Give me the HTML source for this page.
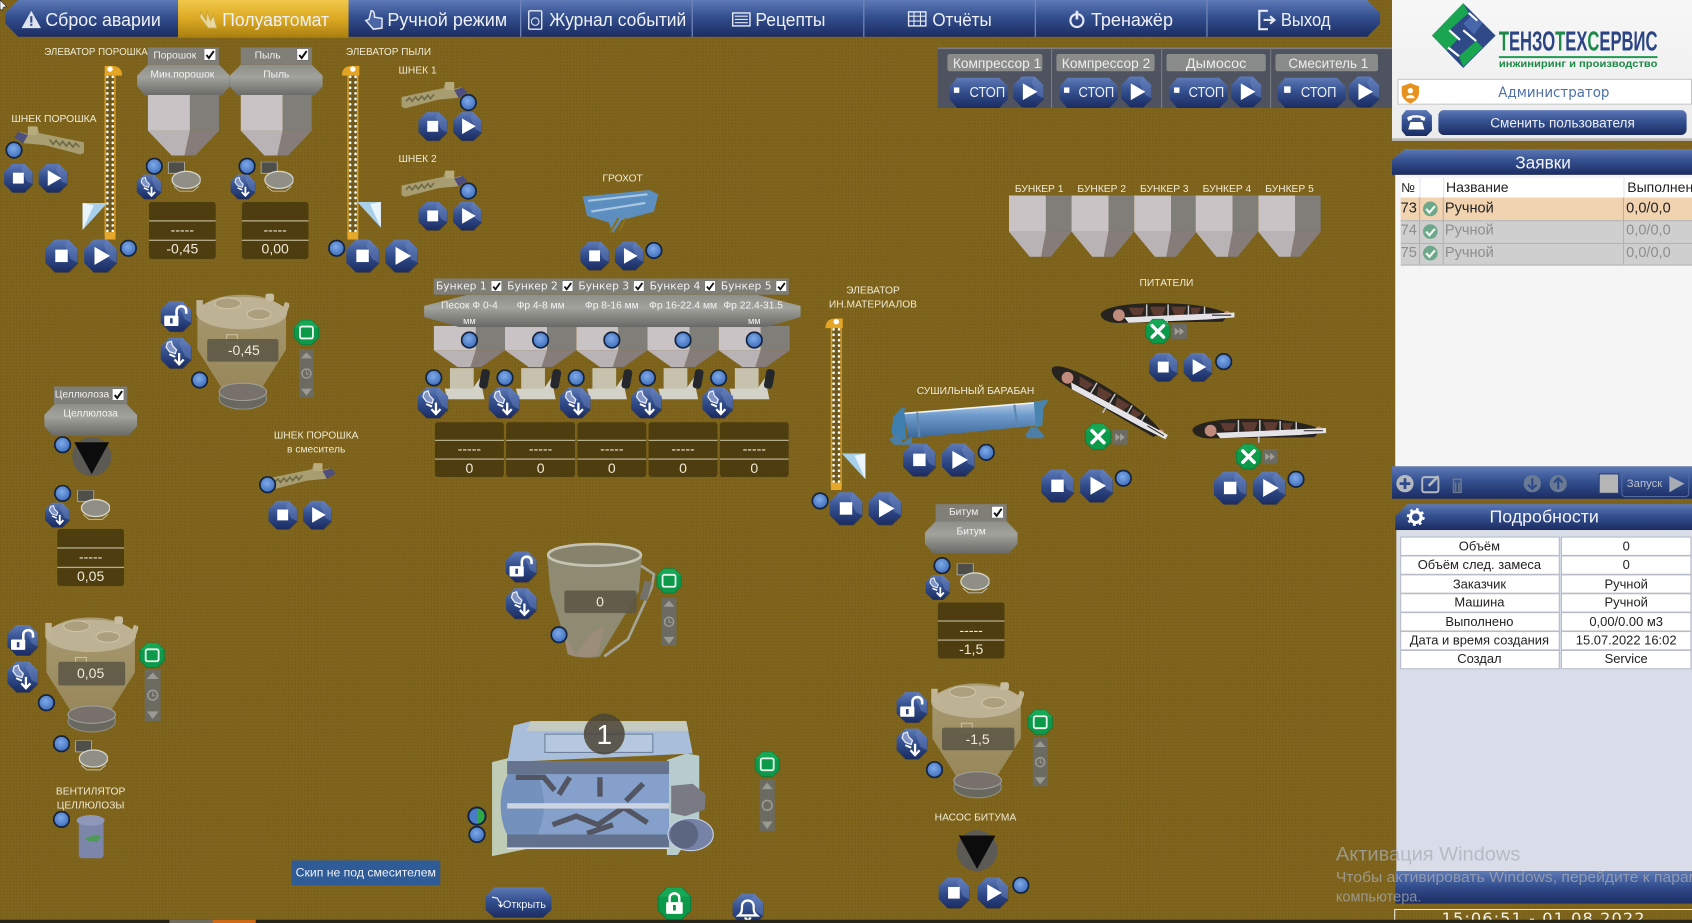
<!DOCTYPE html>
<html lang="ru"><head><meta charset="utf-8"><title>SCADA</title>
<style>
html,body{margin:0;padding:0;background:#7b611b;width:1692px;height:923px;overflow:hidden}
svg{display:block;font-family:"Liberation Sans","DejaVu Sans",sans-serif}
.l{fill:#f0ead4;font-size:9.5px;text-anchor:middle}
.n{fill:#eef0f6;font-size:17px;text-anchor:middle}
.h{fill:#f2f2f2;font-size:9.5px;text-anchor:middle}
.v{fill:#f0ead8;font-size:13px;text-anchor:middle}
.t{fill:#222;font-size:12px;text-anchor:middle}
.r{fill:#222;font-size:13.5px}
.g{fill:#8e8e8e;font-size:13.5px}
.k{fill:#ececec;font-size:13px;text-anchor:middle}
</style></head><body>
<svg width="1692" height="923" viewBox="0 0 1568 855" preserveAspectRatio="none" xmlns="http://www.w3.org/2000/svg">
<defs>
<pattern id="tx" width="3" height="3" patternUnits="userSpaceOnUse"><rect width="3" height="3" fill="#7d631b"/><rect width="1" height="1" fill="#765d19"/><rect x="1.5" y="1.5" width="1" height="1" fill="#84691e"/></pattern>
<linearGradient id="bl" x1="0" y1="0" x2="0" y2="1"><stop offset="0" stop-color="#5d79b6"/><stop offset=".45" stop-color="#34508f"/><stop offset="1" stop-color="#1b2c62"/></linearGradient>
<linearGradient id="go" x1="0" y1="0" x2="0" y2="1"><stop offset="0" stop-color="#f0c84a"/><stop offset=".5" stop-color="#dca922"/><stop offset="1" stop-color="#a87e10"/></linearGradient>
<linearGradient id="ho" x1="0" y1="0" x2="0" y2="1"><stop offset="0" stop-color="#8f8f8a"/><stop offset=".4" stop-color="#a2a29d"/><stop offset="1" stop-color="#686864"/></linearGradient>
<radialGradient id="led" cx=".45" cy=".4" r=".65"><stop offset="0" stop-color="#7eaae8"/><stop offset="1" stop-color="#3a69b8"/></radialGradient>
<linearGradient id="lg" x1="0" y1="0" x2="1" y2="0"><stop offset=".5" stop-color="#4a7cc8"/><stop offset=".5" stop-color="#2ea84a"/></linearGradient>
<linearGradient id="dr" x1="0" y1="0" x2="0" y2="1"><stop offset="0" stop-color="#b7cbe4"/><stop offset=".35" stop-color="#6f9ccc"/><stop offset="1" stop-color="#3a6698"/></linearGradient>
<linearGradient id="pan" x1="0" y1="0" x2="0" y2="1"><stop offset="0" stop-color="#f7f7f7"/><stop offset="1" stop-color="#ececec"/></linearGradient>
<linearGradient id="hb" x1="0" y1="0" x2="0" y2="1"><stop offset="0" stop-color="#a89a72"/><stop offset="1" stop-color="#97875a"/></linearGradient>

<symbol id="oct" viewBox="0 0 100 100"><polygon points="30,4 70,4 96,30 96,70 70,96 30,96 4,70 4,30" fill="#17234a" opacity=".55" transform="translate(2 3)"/><polygon points="30,3 70,3 97,30 97,70 70,97 30,97 3,70 3,30" fill="url(#bl)"/><polygon points="70,3 97,30 97,70 78,60 60,20" fill="#6f8ac4" opacity=".45"/></symbol>
<symbol id="bs" viewBox="0 0 100 100"><use href="#oct" width="100" height="100"/><rect x="32" y="32" width="36" height="36" fill="#fff"/></symbol>
<symbol id="bp" viewBox="0 0 100 100"><use href="#oct" width="100" height="100"/><polygon points="33,24 78,50 33,76" fill="#fff"/></symbol>
<symbol id="bd" viewBox="0 0 100 100"><use href="#oct" width="100" height="100"/><path d="M24 18l12-4 4 14 12 12-4 12-18-6-10-14z" fill="#7f94c4" stroke="#e8ecf6" stroke-width="4"/><path d="M30 54l18 8" stroke="#fff" stroke-width="6"/><path d="M60 50v34M46 70l14 15 14-15" fill="none" stroke="#fff" stroke-width="7"/></symbol>
<symbol id="bu" viewBox="0 0 100 100"><use href="#oct" width="100" height="100"/><rect x="14" y="48" width="44" height="32" rx="3" fill="#fff"/><rect x="32" y="56" width="8" height="16" fill="#2c4485"/><path d="M52 48V34c0-20 30-20 30 0v8" fill="none" stroke="#fff" stroke-width="8"/></symbol>
<symbol id="goct" viewBox="0 0 100 100"><polygon points="30,3 70,3 97,30 97,70 70,97 30,97 3,70 3,30" fill="#0c9a4a" stroke="#0a7a3a" stroke-width="3"/><polygon points="30,3 70,3 97,30 3,30" fill="#1fb25e" opacity=".6"/></symbol>
<symbol id="gs" viewBox="0 0 100 100"><use href="#goct" width="100" height="100"/><rect x="25" y="27" width="50" height="46" rx="7" fill="none" stroke="#e8f8ee" stroke-width="7"/></symbol>
<symbol id="gx" viewBox="0 0 100 100"><use href="#goct" width="100" height="100"/><path d="M28 28l44 44M72 28L28 72" stroke="#fff" stroke-width="13" stroke-linecap="round"/></symbol>
<symbol id="gl" viewBox="0 0 100 100"><use href="#goct" width="100" height="100"/><rect x="26" y="46" width="48" height="34" rx="3" fill="#fff"/><rect x="46" y="54" width="8" height="16" fill="#0c8a42"/><path d="M36 46V34c0-18 28-18 28 0v12" fill="none" stroke="#fff" stroke-width="7"/></symbol>
<symbol id="bl2" viewBox="0 0 100 100"><use href="#oct" width="100" height="100"/><path d="M22 70c10-8 10-16 10-28 0-24 36-24 36 0 0 12 0 20 10 28z M42 76c2 10 14 10 16 0" fill="none" stroke="#fff" stroke-width="7"/></symbol>
<symbol id="ld" viewBox="0 0 20 20"><circle cx="10" cy="10" r="9" fill="url(#led)" stroke="#14233f" stroke-width="2"/></symbol>
<symbol id="ck" viewBox="0 0 12 12"><rect width="12" height="12" fill="#fff" stroke="#555" stroke-width=".8"/><path d="M2.500 6.500l2.500 3 5-7" fill="none" stroke="#111" stroke-width="2"/></symbol>
<symbol id="hood" viewBox="0 0 86 29" preserveAspectRatio="none"><polygon points="10,0 76,0 86,10 86,20 78,29 8,29 0,20 0,10" fill="url(#ho)"/></symbol>
<symbol id="bin" viewBox="0 0 66 56" preserveAspectRatio="none"><polygon points="0,0 39,0 39,33 0,33" fill="#c9c3c5"/><polygon points="39,0 66,0 66,33 39,33" fill="#7f7e78"/><polygon points="0,33 39,33 34,56 22,56" fill="#b9b3b5"/><polygon points="39,33 66,33 44,56 34,56" fill="#867c7a"/></symbol>
<symbol id="dsp" viewBox="0 0 62 53" preserveAspectRatio="none"><rect width="62" height="53" rx="3" fill="#4e3d0f"/><rect y="17" width="62" height="1.200" fill="#b7ae8e"/><rect y="35" width="62" height="1.200" fill="#b7ae8e"/></symbol>
<symbol id="sld" viewBox="0 0 15 48"><rect width="15" height="48" fill="#6c6b62"/><polygon points="2,9 13,9 7.500,3" fill="#9a9a94"/><polygon points="2,39 13,39 7.500,46" fill="#9a9a94"/><circle cx="7.500" cy="24" r="4.500" fill="none" stroke="#9a9a94" stroke-width="1.500"/><path d="M7.500 21v3.500h2.500" fill="none" stroke="#9a9a94"/></symbol>
<symbol id="sc" viewBox="0 0 36 32"><rect x="2" y="0" width="17" height="12" fill="#4d4f48" stroke="#bcbcb4" stroke-width=".8"/><ellipse cx="21" cy="19" rx="15" ry="9" fill="#8f8f86" stroke="#d6d6d0" stroke-width="1.400"/><path d="M8 26l6 5 14 0 6-5" fill="none" stroke="#bfbfb8"/></symbol>
<symbol id="scr" viewBox="0 0 76 32"><path d="M0 17l48-10 2-7h10v8l8-2 6 6-10 6-22 2-38 10-4-2z" fill="#a89d70"/><rect x="50" y="0" width="10" height="9" fill="#b8ac7e"/><polygon points="60,9 70,6 75,12 65,18" fill="#4f4f7e"/><path d="M5 22l4-4 3 4 4-5 3 4 4-5 3 4 4-5 3 4 4-5" fill="none" stroke="#6f6a46" stroke-width="1.800"/></symbol>
<symbol id="ffb" viewBox="0 0 16 16"><rect width="16" height="16" fill="#6c6b62"/><polygon points="3,4 8,8 3,12" fill="#9f9f98"/><polygon points="8,4 13,8 8,12" fill="#9f9f98"/></symbol>
<symbol id="conv" viewBox="0 0 125 24" preserveAspectRatio="none"><path d="M0 11C2 4 30 0 60 1c30 0 50 5 60 10l-6 7-94 1C8 20 0 16 0 11z" fill="#27231f"/><circle cx="17" cy="12" r="5.500" fill="#c08a7c"/><circle cx="118" cy="11" r="3" fill="#c08a7c"/><path d="M26 5h15l-3 7H30zM46 4h15l-3 8H49zM66 4h14l-3 8H69zM84 5h10l-3 6h-6z" fill="#5e3c32"/><path d="M43 2v14M63 2v14M82 3v13M97 4v10" stroke="#c9c9cc" stroke-width="1.400"/><polygon points="22,14 125,9.500 125,14 100,16 26,19" fill="#e4e4e8"/><path d="M104 12h18" stroke="#2a2622"/><path d="M62 17v6" stroke="#bbb" stroke-width="1.500"/></symbol>
<symbol id="hop" viewBox="0 0 88 110" preserveAspectRatio="none"><path d="M3 22C6 8 26 3 44 3s38 5 41 19v32L61 92H27L3 54z" fill="url(#hb)"/><ellipse cx="44" cy="20" rx="42" ry="15" fill="#bdb294"/><ellipse cx="31" cy="11" rx="12" ry="5" fill="#ab9f7e" stroke="#cec4a8"/><ellipse cx="60" cy="21" rx="11" ry="5" fill="#ab9f7e" stroke="#cec4a8"/><rect x="66" y="2" width="8" height="7" rx="2" fill="#c6bca0"/><rect x="2" y="8" width="6" height="12" fill="#bfb596"/><rect x="82" y="10" width="5" height="14" fill="#bfb596" transform="rotate(20 84 16)"/><rect x="30" y="40" width="10" height="8" fill="none" stroke="#c9bf9f"/><ellipse cx="45" cy="99" rx="22" ry="10" fill="#68685f" stroke="#8e8e86"/><ellipse cx="45" cy="93" rx="22" ry="8" fill="#78706a" stroke="#9ea09a"/></symbol>
<symbol id="elev" viewBox="0 0 16 160" preserveAspectRatio="none"><rect x="5" y="0" width="6" height="160" fill="#6e5a20"/><path d="M3.500 6V156M12.500 6V156" stroke="#d89a22" stroke-width="1.400"/><path d="M5.500 4V156M10.500 4V156" stroke="#fff" stroke-width="2.400" stroke-linecap="round" stroke-dasharray=".1 5"/><rect x="3" y="153" width="10" height="7" fill="#e6a82a"/></symbol>
<symbol id="fun" viewBox="0 0 22 24"><polygon points="0,0 22,0 22,24" fill="#a8d0ea"/><polygon points="12,2 22,0 22,24" fill="#eaf5fb"/></symbol>
<symbol id="wei" viewBox="0 0 44 30"><rect x="5" y="1" width="22" height="20" fill="#c7c2ae"/><polygon points="0,20 26,20 33,10 37,30 3,30" fill="#d3d2c9"/><rect x="33" y="2" width="8" height="18" rx="3" fill="#24272c" transform="rotate(10 37 11)"/></symbol>
<symbol id="pump" viewBox="0 0 40 40"><circle cx="20" cy="20" r="19" fill="#5b5a55"/><polygon points="3,6 37,6 20,37" fill="#0c0c0c"/></symbol>
<symbol id="chk" viewBox="0 0 20 20"><circle cx="10" cy="10" r="8" fill="#6ea88a"/><path d="M5.500 10l3.500 4 6-7" fill="none" stroke="#eef6f0" stroke-width="2.400"/></symbol>
</defs>

<rect width="1568" height="855" fill="url(#tx)"/>
<polygon points="0,0 6,6 3,7 2,10 0,8" fill="#eee" stroke="#111" stroke-width=".5"/>

<!-- NAV -->
<polygon points="17,0 1267,0 1279,12 1279,22 1267,34 17,34 5,22 5,12" fill="url(#bl)"/>
<rect x="165" y="0" width="158" height="35" fill="url(#go)"/>
<path d="M482.500 0V34M641.500 0V34M800.500 0V34M959.500 0V34M1118.500 0V34" stroke="#6f85b8" stroke-width="1.200"/>
<text class="n" x="95.500" y="24" textLength="107" lengthAdjust="spacingAndGlyphs">Сброс аварии</text>
<text class="n" x="255.500" y="24" textLength="99" lengthAdjust="spacingAndGlyphs">Полуавтомат</text>
<text class="n" x="414.500" y="24" textLength="111" lengthAdjust="spacingAndGlyphs">Ручной режим</text>
<text class="n" x="572.500" y="24" textLength="127" lengthAdjust="spacingAndGlyphs">Журнал событий</text>
<text class="n" x="732.500" y="24" textLength="65" lengthAdjust="spacingAndGlyphs">Рецепты</text>
<text class="n" x="891.500" y="24" textLength="55" lengthAdjust="spacingAndGlyphs">Отчёты</text>
<text class="n" x="1049" y="24" textLength="76" lengthAdjust="spacingAndGlyphs">Тренажёр</text>
<text class="n" x="1210" y="24" textLength="46" lengthAdjust="spacingAndGlyphs">Выход</text>
<path d="M29 10l9 16H20z" fill="#dfe3ec"/><rect x="28" y="15" width="2" height="6" fill="#344e8d"/><rect x="28" y="22" width="2" height="2" fill="#344e8d"/>
<path d="M186 11l5 8 1-9 3 9 3-5 3 12h-8l-8-10z" fill="#e8d9a0" stroke="#caa63c"/>
<path d="M344 10c3 0 3 3 3 6l7 1 0 9-8 1-7-8 3-1z" fill="#4a66a6" stroke="#e4e8f2" stroke-width="1.400"/>
<rect x="490" y="10" width="12" height="17" rx="1" fill="none" stroke="#e4e8f2" stroke-width="1.300"/><circle cx="496" cy="20" r="3.500" fill="none" stroke="#e4e8f2"/>
<rect x="679" y="12" width="16" height="12" fill="none" stroke="#e4e8f2" stroke-width="1.300"/><path d="M681 15h12M681 18h12M681 21h12" stroke="#e4e8f2"/>
<rect x="842" y="11" width="16" height="13" fill="none" stroke="#e4e8f2" stroke-width="1.300"/><path d="M842 15h16M842 19.500h16M847 11v13M853 11v13" stroke="#e4e8f2"/>
<circle cx="998" cy="19" r="6" fill="none" stroke="#e4e8f2" stroke-width="2"/><path d="M998 10v8" stroke="#e4e8f2" stroke-width="2.500"/>
<path d="M1175 10h-8v17h8M1171 18.500h9M1177 15l4 3.500-4 3.500" fill="none" stroke="#e4e8f2" stroke-width="2"/>

<!-- Elevator 1 -->
<text class="l" x="89" y="51" textLength="96" lengthAdjust="spacingAndGlyphs">ЭЛЕВАТОР ПОРОШКА</text>
<use href="#elev" x="94" y="62" width="16" height="160"/>
<path d="M97 70v-9h6c6 0 10 2 10 9z" fill="#e4a525"/><circle cx="102" cy="64" r="2.500" fill="#fff"/>
<use href="#fun" x="76" y="188" width="24" height="25" transform="translate(176 0) scale(-1 1)"/>
<!-- Powders -->
<rect x="137" y="44" width="66" height="16" fill="#7f7e77"/><rect x="223" y="44" width="66" height="16" fill="#7f7e77"/>
<text class="h" x="162" y="54">Порошок</text><text class="h" x="248" y="54">Пыль</text>
<use href="#ck" x="189" y="45" width="11" height="11"/><use href="#ck" x="275" y="45" width="11" height="11"/>
<use href="#hood" x="127" y="60" width="86" height="29"/><use href="#hood" x="213" y="60" width="86" height="29"/>
<text class="h" x="169" y="72">Мин.порошок</text><text class="h" x="256" y="72">Пыль</text>
<use href="#bin" x="137" y="88" width="66" height="56"/><use href="#bin" x="223" y="88" width="66" height="56"/>
<use href="#sc" x="154" y="150" width="32" height="28"/><use href="#sc" x="240" y="150" width="32" height="28"/>
<use href="#ld" x="135" y="146" width="16" height="16"/><use href="#ld" x="221" y="146" width="16" height="16"/>
<use href="#bd" x="126" y="161" width="24" height="24"/><use href="#bd" x="213" y="161" width="24" height="24"/>
<use href="#dsp" x="138" y="187" width="62" height="53"/><use href="#dsp" x="224" y="187" width="62" height="53"/>
<text class="v" x="169" y="217">-----</text><text class="v" x="255" y="217">-----</text>
<text class="v" x="169" y="235">-0,45</text><text class="v" x="255" y="235">0,00</text>
<!-- Elevator 2 -->
<text class="l" x="360" y="51" textLength="79" lengthAdjust="spacingAndGlyphs">ЭЛЕВАТОР ПЫЛИ</text>
<use href="#elev" x="319" y="62" width="16" height="160"/>
<path d="M333 70v-9h-6c-6 0-10 2-10 9z" fill="#e4a525"/><circle cx="327" cy="64" r="2.500" fill="#fff"/>
<use href="#fun" x="331" y="187" width="22" height="24"/>
<!-- screws -->
<text class="l" x="50" y="113" textLength="79" lengthAdjust="spacingAndGlyphs">ШНЕК ПОРОШКА</text>
<use href="#scr" x="12" y="117" width="66" height="28" transform="translate(90 0) scale(-1 1)"/>
<use href="#ld" x="5" y="131" width="16" height="16"/>
<text class="l" x="387" y="68">ШНЕК 1</text><use href="#scr" x="370" y="76" width="66" height="26"/><use href="#ld" x="426" y="87" width="16" height="16"/>
<text class="l" x="387" y="150">ШНЕК 2</text><use href="#scr" x="370" y="158" width="66" height="26"/><use href="#ld" x="426" y="169" width="16" height="16"/>
<text class="l" x="293" y="406">ШНЕК ПОРОШКА</text><text class="l" x="293" y="419">в смеситель</text>
<use href="#scr" x="248" y="429" width="66" height="26"/><use href="#ld" x="240" y="441" width="16" height="16"/>
<!-- grokhot -->
<text class="l" x="577" y="168">ГРОХОТ</text>
<path d="M540 182l62-6 8 4-4 16-30 8-8 12-4-10-20-6z" fill="#5c8fc0"/><path d="M545 186l55-6M548 196l50-8" stroke="#a9c8e2" stroke-width="2"/><path d="M565 216l8-14M574 214l6-12" stroke="#8a6f1c" stroke-width="2"/>
<!-- Compressors -->
<rect x="869" y="44" width="421" height="56" fill="#4e535f"/>
<rect x="869" y="44" width="421" height="1.500" fill="#7a7d83"/>
<path d="M974.500 46V100M1076.500 46V100M1177.500 46V100" stroke="#7a7d83"/>
<g fill="#8a8c8a"><rect x="878" y="50" width="88" height="16" rx="2"/><rect x="979" y="50" width="91" height="16" rx="2"/><rect x="1081" y="50" width="92" height="16" rx="2"/><rect x="1182" y="50" width="95" height="16" rx="2"/></g>
<text class="k" x="924" y="63" textLength="82" lengthAdjust="spacingAndGlyphs">Компрессор 1</text>
<text class="k" x="1025" y="63" textLength="82" lengthAdjust="spacingAndGlyphs">Компрессор 2</text>
<text class="k" x="1127" y="63" textLength="56" lengthAdjust="spacingAndGlyphs">Дымосос</text>
<text class="k" x="1231" y="63" textLength="74" lengthAdjust="spacingAndGlyphs">Смеситель 1</text>
<g fill="url(#bl)">
<polygon points="887,72 926,72 934,80 934,92 926,100 887,100 880,92 880,80"/>
<polygon points="989,72 1028,72 1036,80 1036,92 1028,100 989,100 982,92 982,80"/>
<polygon points="1091,72 1130,72 1138,80 1138,92 1130,100 1091,100 1084,92 1084,80"/>
<polygon points="1191,72 1239,72 1247,80 1247,92 1239,100 1191,100 1184,92 1184,80"/>
</g>
<g fill="#fff"><rect x="884" y="81" width="5" height="5"/><rect x="986" y="81" width="5" height="5"/><rect x="1088" y="81" width="5" height="5"/><rect x="1190" y="80" width="6" height="6"/></g>
<g fill="#eef0f6" font-size="14" text-anchor="middle"><text x="915" y="90" textLength="33" lengthAdjust="spacingAndGlyphs">СТОП</text><text x="1016" y="90" textLength="33" lengthAdjust="spacingAndGlyphs">СТОП</text><text x="1118" y="90" textLength="33" lengthAdjust="spacingAndGlyphs">СТОП</text><text x="1222" y="90" textLength="33" lengthAdjust="spacingAndGlyphs">СТОП</text></g>
<use href="#bp" x="938" y="70" width="30" height="30"/><use href="#bp" x="1038" y="70" width="30" height="30"/><use href="#bp" x="1140" y="70" width="30" height="30"/><use href="#bp" x="1249" y="70" width="30" height="30"/>
<!-- Bunkers right -->
<g><text class="l" x="963" y="178">БУНКЕР 1</text><text class="l" x="1021" y="178">БУНКЕР 2</text><text class="l" x="1079" y="178">БУНКЕР 3</text><text class="l" x="1137" y="178">БУНКЕР 4</text><text class="l" x="1195" y="178">БУНКЕР 5</text></g>
<use href="#bin" x="935" y="181" width="58" height="57"/><use href="#bin" x="993" y="181" width="58" height="57"/><use href="#bin" x="1051" y="181" width="58" height="57"/><use href="#bin" x="1108" y="181" width="58" height="57"/><use href="#bin" x="1166" y="181" width="58" height="57"/>
<!-- Hopper 1 -->
<use href="#hop" x="180" y="270" width="88" height="110"/>
<rect x="192" y="314" width="66" height="21" rx="2" fill="#5c5646" opacity=".88"/><text class="v" x="226" y="329">-0,45</text>
<use href="#bu" x="148" y="278" width="30" height="30"/><use href="#bd" x="148" y="312" width="30" height="30"/>
<use href="#ld" x="177" y="344" width="16" height="16"/>
<use href="#gs" x="272" y="296" width="24" height="24"/><use href="#sld" x="277" y="322" width="14" height="48"/>
<!-- Aggregates -->
<rect x="402" y="258" width="329" height="15" fill="#7f7e77"/>
<g fill="#f2f2f2" font-size="9.500" font-family="DejaVu Sans" style="white-space:pre"><text x="404" y="268" textLength="47" lengthAdjust="spacingAndGlyphs">Бункер  1</text><text x="470" y="268" textLength="47" lengthAdjust="spacingAndGlyphs">Бункер  2</text><text x="536" y="268" textLength="47" lengthAdjust="spacingAndGlyphs">Бункер  3</text><text x="602" y="268" textLength="47" lengthAdjust="spacingAndGlyphs">Бункер  4</text><text x="668" y="268" textLength="47" lengthAdjust="spacingAndGlyphs">Бункер  5</text></g>
<use href="#ck" x="455" y="260" width="10" height="10"/><use href="#ck" x="521" y="260" width="10" height="10"/><use href="#ck" x="587" y="260" width="10" height="10"/><use href="#ck" x="653" y="260" width="10" height="10"/><use href="#ck" x="719" y="260" width="10" height="10"/>
<use href="#bin" x="402" y="302" width="66" height="38"/><use href="#bin" x="468" y="302" width="66" height="38"/><use href="#bin" x="534" y="302" width="66" height="38"/><use href="#bin" x="600" y="302" width="66" height="38"/><use href="#bin" x="666" y="302" width="66" height="38"/>
<use href="#hood" x="393" y="273" width="349" height="30"/>
<g><text class="h" x="435" y="286">Песок Ф 0-4</text><text class="h" x="501" y="286">Фр 4-8 мм</text><text class="h" x="567" y="286">Фр 8-16 мм</text><text class="h" x="633" y="286">Фр 16-22.4 мм</text><text class="h" x="698" y="286">Фр 22.4-31.5</text><text class="h" x="435" y="300" style="font-size:8.500px">мм</text><text class="h" x="699" y="300" style="font-size:8.500px">мм</text></g>
<use href="#ld" x="427" y="307" width="16" height="16"/><use href="#ld" x="493" y="307" width="16" height="16"/><use href="#ld" x="559" y="307" width="16" height="16"/><use href="#ld" x="625" y="307" width="16" height="16"/><use href="#ld" x="691" y="307" width="16" height="16"/>
<use href="#wei" x="412" y="340" width="44" height="30"/><use href="#wei" x="478" y="340" width="44" height="30"/><use href="#wei" x="544" y="340" width="44" height="30"/><use href="#wei" x="610" y="340" width="44" height="30"/><use href="#wei" x="676" y="340" width="44" height="30"/>
<use href="#ld" x="394" y="342" width="16" height="16"/><use href="#ld" x="460" y="342" width="16" height="16"/><use href="#ld" x="526" y="342" width="16" height="16"/><use href="#ld" x="592" y="342" width="16" height="16"/><use href="#ld" x="658" y="342" width="16" height="16"/>
<use href="#bd" x="386" y="358" width="30" height="30"/><use href="#bd" x="452" y="358" width="30" height="30"/><use href="#bd" x="518" y="358" width="30" height="30"/><use href="#bd" x="584" y="358" width="30" height="30"/><use href="#bd" x="650" y="358" width="30" height="30"/>
<use href="#dsp" x="403" y="391" width="64" height="51"/><use href="#dsp" x="469" y="391" width="64" height="51"/><use href="#dsp" x="535" y="391" width="64" height="51"/><use href="#dsp" x="601" y="391" width="64" height="51"/><use href="#dsp" x="667" y="391" width="64" height="51"/>
<g><text class="v" x="435" y="420">-----</text><text class="v" x="501" y="420">-----</text><text class="v" x="567" y="420">-----</text><text class="v" x="633" y="420">-----</text><text class="v" x="699" y="420">-----</text><text class="v" x="435" y="438">0</text><text class="v" x="501" y="438">0</text><text class="v" x="567" y="438">0</text><text class="v" x="633" y="438">0</text><text class="v" x="699" y="438">0</text></g>
<!-- Elevator 3 -->
<text class="l" x="809" y="272">ЭЛЕВАТОР</text><text class="l" x="809" y="285">ИН.МАТЕРИАЛОВ</text>
<use href="#elev" x="767" y="296" width="16" height="158"/>
<path d="M781 304v-9h-6c-6 0-10 2-10 9z" fill="#e4a525"/><circle cx="775" cy="298" r="2.500" fill="#fff"/>
<use href="#fun" x="780" y="420" width="22" height="24"/>
<!-- Cellulose -->
<rect x="50" y="358" width="68" height="16" fill="#7f7e77"/><text class="h" x="76" y="368">Целлюлоза</text><use href="#ck" x="104" y="360" width="11" height="11"/>
<use href="#hood" x="41" y="374" width="86" height="30"/><text class="h" x="84" y="386">Целлюлоза</text>
<use href="#pump" x="66" y="404" width="38" height="38"/><use href="#ld" x="50" y="404" width="16" height="16"/>
<use href="#ld" x="50" y="449" width="16" height="16"/><use href="#bd" x="41" y="465" width="24" height="24"/><use href="#sc" x="70" y="454" width="32" height="28"/>
<use href="#dsp" x="53" y="490" width="62" height="53"/><text class="v" x="84" y="520">-----</text><text class="v" x="84" y="538">0,05</text>
<!-- Hopper 2 -->
<use href="#hop" x="40" y="569" width="88" height="110"/>
<rect x="54" y="613" width="62" height="22" rx="2" fill="#5c5646" opacity=".88"/><text class="v" x="84" y="628">0,05</text>
<use href="#bu" x="6" y="578" width="30" height="30"/><use href="#bd" x="6" y="612" width="30" height="30"/>
<use href="#ld" x="35" y="643" width="16" height="16"/>
<use href="#gs" x="129" y="595" width="24" height="24"/><use href="#sld" x="134" y="620" width="15" height="48"/>
<use href="#ld" x="49" y="681" width="16" height="16"/><use href="#sc" x="68" y="686" width="32" height="28"/>
<!-- vent -->
<text class="l" x="84" y="736">ВЕНТИЛЯТОР</text><text class="l" x="84" y="749">ЦЕЛЛЮЛОЗЫ</text>
<use href="#ld" x="49" y="751" width="16" height="16"/>
<rect x="73" y="760" width="23" height="35" rx="3" fill="#7c86aa"/><ellipse cx="84" cy="760" rx="13" ry="5" fill="#8f98b8"/><path d="M78 777l10-4 6 2-4 5-8-1z" fill="#4f9a58"/>
<!-- Hopper 3 -->
<path d="M507 514L510 548 527 604Q540 612 556 608L592 548 595 514z" fill="#8f8a72"/>
<path d="M522 585l12 22 12-18 14-10-6 28q-16 4-28-1z" fill="#9c8c7a"/>
<ellipse cx="551" cy="514" rx="43" ry="10" fill="#86826c" stroke="#c6c5b4" stroke-width="2.500"/>
<path d="M594 524l12 8-2 12-22 48-22 16" fill="none" stroke="#a4a498" stroke-width="2.500"/>
<rect x="595" y="538" width="7" height="18" fill="#73736c" transform="rotate(16 598 547)"/>
<rect x="523" y="547" width="67" height="21" rx="2" fill="#5c5646" opacity=".88"/><text class="v" x="556" y="562">0</text>
<use href="#bu" x="468" y="510" width="30" height="30"/><use href="#bd" x="468" y="544" width="30" height="30"/>
<use href="#ld" x="510" y="580" width="16" height="16"/>
<use href="#gs" x="608" y="526" width="24" height="24"/><use href="#sld" x="613" y="552" width="14" height="48"/>
<!-- Bitum -->
<rect x="867" y="467" width="66" height="16" fill="#7f7e77"/><text class="h" x="893" y="477">Битум</text><use href="#ck" x="919" y="469" width="11" height="11"/>
<use href="#hood" x="857" y="483" width="86" height="30"/><text class="h" x="900" y="495">Битум</text>
<use href="#ld" x="865" y="516" width="16" height="16"/><use href="#bd" x="857" y="532" width="24" height="24"/><use href="#sc" x="885" y="522" width="32" height="28"/>
<use href="#dsp" x="869" y="558" width="62" height="52"/><text class="v" x="900" y="588">-----</text><text class="v" x="900" y="606">-1,5</text>
<!-- Hopper 4 -->
<use href="#hop" x="861" y="630" width="88" height="110"/>
<rect x="873" y="674" width="67" height="21" rx="2" fill="#5c5646" opacity=".88"/><text class="v" x="906" y="689">-1,5</text>
<use href="#bu" x="830" y="640" width="30" height="30"/><use href="#bd" x="830" y="674" width="30" height="30"/>
<use href="#ld" x="858" y="705" width="16" height="16"/>
<use href="#gs" x="952" y="657" width="24" height="24"/><use href="#sld" x="957" y="682" width="14" height="48"/>
<text class="l" x="904" y="760">НАСОС БИТУМА</text>
<use href="#pump" x="885" y="768" width="41" height="40"/>
<!-- Drum -->
<text class="l" x="904" y="365">СУШИЛЬНЫЙ БАРАБАН</text>
<polygon points="838,383 960,373 963,394 842,406" fill="url(#dr)"/><path d="M838 383l122-10" stroke="#eef3f8" stroke-width="1.500"/>
<path d="M850 382l2 23M940 375l3 21" stroke="#5f86ae" stroke-width="2"/>
<path d="M840 378l-5 0-7 8-2 14 4 8 10-1-2-27z" fill="#3f7fb0"/><path d="M958 372l14-2-5 8-1 16-6 2z" fill="#4a84ac"/>
<path d="M824 407l7-5 6 8 8-6 0 8h-16zM950 403l6-8 6 2 6 7-2 2h-14z" fill="#4d7fa6"/>
<!-- conveyors -->
<use href="#conv" x="1020" y="280" width="124" height="24"/>
<use href="#conv" x="1105" y="387" width="124" height="24"/>
<use href="#conv" width="124" height="24" transform="translate(981 331) rotate(31)"/>
<text class="l" x="1081" y="265">ПИТАТЕЛИ</text>
<use href="#gx" x="1061" y="295" width="24" height="24"/><use href="#ffb" x="1086" y="300" width="14" height="14"/>
<use href="#gx" x="1005" y="392" width="25" height="25"/><use href="#ffb" x="1031" y="398" width="14" height="14"/>
<use href="#gx" x="1145" y="411" width="24" height="24"/><use href="#ffb" x="1170" y="416" width="14" height="14"/>
<!-- Stop play pairs -->
<use href="#bs" x="3" y="151" width="28" height="28"/><use href="#bp" x="35" y="151" width="28" height="28"/>
<use href="#bs" x="41" y="221" width="32" height="32"/><use href="#bp" x="77" y="221" width="32" height="32"/><use href="#ld" x="111" y="222" width="16" height="16"/>
<use href="#bs" x="320" y="221" width="32" height="32"/><use href="#bp" x="356" y="221" width="32" height="32"/><use href="#ld" x="304" y="222" width="16" height="16"/>
<use href="#bs" x="387" y="103" width="28" height="28"/><use href="#bp" x="419" y="103" width="28" height="28"/>
<use href="#bs" x="387" y="186" width="28" height="28"/><use href="#bp" x="419" y="186" width="28" height="28"/>
<use href="#bs" x="537" y="223" width="28" height="28"/><use href="#bp" x="569" y="223" width="28" height="28"/><use href="#ld" x="598" y="224" width="16" height="16"/>
<use href="#bs" x="836" y="410" width="32" height="32"/><use href="#bp" x="872" y="410" width="32" height="32"/><use href="#ld" x="906" y="411" width="16" height="16"/>
<use href="#bs" x="964" y="434" width="32" height="32"/><use href="#bp" x="1000" y="434" width="32" height="32"/><use href="#ld" x="1033" y="435" width="16" height="16"/>
<use href="#bs" x="1064" y="326" width="28" height="28"/><use href="#bp" x="1096" y="326" width="28" height="28"/><use href="#ld" x="1126" y="327" width="16" height="16"/>
<use href="#bs" x="1124" y="436" width="32" height="32"/><use href="#bp" x="1160" y="436" width="32" height="32"/><use href="#ld" x="1193" y="436" width="16" height="16"/>
<use href="#bs" x="768" y="455" width="32" height="32"/><use href="#bp" x="804" y="455" width="32" height="32"/><use href="#ld" x="752" y="456" width="16" height="16"/>
<use href="#bs" x="248" y="463" width="28" height="28"/><use href="#bp" x="280" y="463" width="28" height="28"/>
<use href="#bs" x="869" y="812" width="30" height="30"/><use href="#bp" x="905" y="812" width="30" height="30"/><use href="#ld" x="938" y="812" width="16" height="16"/>
<!-- Mixer -->
<polygon points="456,706 472,702 472,782 500,784 456,793" fill="#c6d8c8" opacity=".9"/>
<polygon points="618,704 636,698 648,700 648,760 628,792 618,792" fill="#bcd6dc" opacity=".92"/>
<polygon points="476,672 492,668 636,668 642,698 470,706" fill="#a9bedb"/>
<polygon points="492,668 636,668 638,677 488,677" fill="#c6cbc2"/>
<rect x="505" y="680" width="100" height="17" fill="#b6c8df" stroke="#6d7f98"/>
<rect x="470" y="705" width="150" height="80" fill="#85a0ca"/>
<ellipse cx="484" cy="746" rx="20" ry="38" fill="#7490bd"/>
<rect x="470" y="705" width="150" height="12" fill="#65738c"/>
<path d="M478 720h26l10 12M528 720l-10 16M556 720v18M596 726l-16 16M512 764l22-8 20 8 24-16 22 14M544 772l24-8" fill="none" stroke="#535662" stroke-width="5"/>
<rect x="470" y="744" width="150" height="5" fill="#cbd4e0"/>
<rect x="470" y="773" width="150" height="12" fill="#62718d"/>
<rect x="470" y="785" width="150" height="1.500" fill="#e0e4ea"/>
<path d="M622 728l20-2 12 10-1 14-18 6-13-3z" fill="#7a7a84"/>
<ellipse cx="640" cy="773" rx="21" ry="15" fill="#7783a6" stroke="#c6d2e4"/>
<ellipse cx="634" cy="773" rx="13" ry="13" fill="#5d6680"/>
<circle cx="560" cy="680" r="19" fill="#4a4436" opacity=".85"/><text x="560" y="689" fill="#fff" font-size="26" text-anchor="middle">1</text>
<circle cx="442" cy="756" r="8" fill="url(#lg)" stroke="#14233f" stroke-width="1.800"/><use href="#ld" x="434" y="765" width="16" height="16"/>
<use href="#gs" x="699" y="696" width="24" height="24"/>
<rect x="704" y="722" width="14" height="48" fill="#6c6b62"/><polygon points="706,731 716,731 711,725" fill="#9a9a94"/><polygon points="706,761 716,761 711,768" fill="#9a9a94"/><circle cx="711" cy="746" r="4.500" fill="none" stroke="#9a9a94" stroke-width="1.500"/>
<!-- bottom controls -->
<rect x="270" y="797" width="138" height="23" rx="2" fill="#2f5b96"/>
<text x="339" y="812" fill="#eef2f8" font-size="11" text-anchor="middle" textLength="130" lengthAdjust="spacingAndGlyphs">Скип не под смесителем</text>
<polygon points="458,822 503,822 511,830 511,843 503,850 458,850 450,843 450,830" fill="url(#bl)"/>
<text x="486" y="841" fill="#f0f2f8" font-size="10.500" text-anchor="middle" textLength="40" lengthAdjust="spacingAndGlyphs">Открыть</text><path d="M456 831l5 1 2 4M464 835v5l-2-2m2 2l2-2" fill="none" stroke="#fff"/>
<use href="#gl" x="609" y="821" width="32" height="32"/>
<use href="#bl2" x="678" y="827" width="30" height="30"/>

<!-- RIGHT PANEL -->
<rect x="1290" y="0" width="278" height="129" fill="url(#pan)"/>
<rect x="1290" y="128" width="278" height="2.500" fill="#bcbcbc"/>
<g>
<polygon points="1356,3 1386,33 1356,63 1327,33" fill="#2f4a86"/>
<polygon points="1356,3 1327,33 1341,47 1351,36 1343,28 1361,12" fill="#1aa650"/>
<polygon points="1364,14 1374,21 1366,32 1356,22" fill="#4767ad"/>
<polygon points="1352,52 1368,38 1374,44 1356,62" fill="#1aa650"/>
<path d="M1343 28l10 9M1361 12l8 7M1352 52l-10-8M1368 38l-12-10" stroke="#fff" stroke-width="2"/>
</g>
<text x="1389" y="47" font-size="26" font-weight="bold" fill="#2b4484" textLength="147" lengthAdjust="spacingAndGlyphs"><tspan fill="#1d8a4a">Т</tspan>ЕНЗО<tspan fill="#1d8a4a">Т</tspan>ЕХ<tspan fill="#1d8a4a">С</tspan>ЕРВИС</text>
<rect x="1389" y="52" width="147" height="1.800" fill="#1d9a50"/>
<text x="1389" y="62" font-size="9.500" font-weight="bold" fill="#1e8a48" textLength="147" lengthAdjust="spacingAndGlyphs">инжиниринг и производство</text>
<rect x="1295.500" y="73.500" width="272" height="23" fill="#fff" stroke="#c8c8c8"/>
<path d="M1307 77l8 3v6c0 5-4 8-8 10-4-2-8-5-8-10v-6z" fill="#e8921e"/><circle cx="1307" cy="84" r="2.500" fill="#fff"/><path d="M1303 91c0-4 8-4 8 0z" fill="#fff"/>
<text x="1440" y="90" fill="#4d70a8" font-size="13" font-family="DejaVu Sans" text-anchor="middle" textLength="103" lengthAdjust="spacingAndGlyphs">Администратор</text>
<polygon points="1303,102 1322,102 1327,107 1327,121 1322,126 1303,126 1299,121 1299,107" fill="url(#bl)"/>
<path d="M1304 109c3-3 13-3 17 0l-1 3-3-1-1-2h-7l-1 2-3 1zM1307 113h11l2 7h-15z" fill="#fff"/>
<rect x="1333" y="102" width="230" height="23" rx="5" fill="url(#bl)"/>
<text x="1448" y="118" fill="#eef0f6" font-size="12.500" text-anchor="middle" textLength="134" lengthAdjust="spacingAndGlyphs">Сменить пользователя</text>

<polygon points="1302,138 1568,138 1568,162 1290,162 1290,148" fill="url(#bl)"/>
<text x="1430" y="156" fill="#f4f4f8" font-size="16" text-anchor="middle">Заявки</text>
<rect x="1293" y="162" width="275" height="270" fill="#f5f5f6"/>
<rect x="1298" y="165" width="270" height="18" fill="#ffffff"/>
<path d="M1316 165v18M1338 165v18M1505 165v18" stroke="#e0e5ec"/>
<text x="1305" y="178" font-size="12" fill="#222" text-anchor="middle">№</text>
<text x="1340" y="178" font-size="13" fill="#222">Название</text>
<text x="1508" y="178" font-size="13" fill="#222">Выполнен</text>
<rect x="1298" y="183" width="270" height="21" fill="#f2d3b0"/>
<rect x="1298" y="204" width="270" height="41" fill="#cfcfcf"/>
<path d="M1298 204.500h270M1298 225.500h270M1298 245.500h270M1315.500 183v62M1337.500 183v62M1504.500 183v62" stroke="#b3b3b3"/>
<use href="#chk" x="1317" y="185" width="17" height="17"/><use href="#chk" x="1317" y="206" width="17" height="17"/><use href="#chk" x="1317" y="226" width="17" height="17"/>
<text class="r" x="1298" y="197">73</text><text class="r" x="1339" y="197">Ручной</text><text class="r" x="1507" y="197">0,0/0,0</text>
<text class="g" x="1298" y="217">74</text><text class="g" x="1339" y="217">Ручной</text><text class="g" x="1507" y="217">0,0/0,0</text>
<text class="g" x="1298" y="238">75</text><text class="g" x="1339" y="238">Ручной</text><text class="g" x="1507" y="238">0,0/0,0</text>
<rect x="1290" y="432" width="278" height="30" fill="url(#bl)"/>
<circle cx="1302" cy="448" r="8" fill="#b5b9c0"/><path d="M1297 448h10M1302 443v10" stroke="#2f4a88" stroke-width="2.500"/>
<rect x="1318" y="442" width="15" height="14" rx="2" fill="none" stroke="#b5b9c0" stroke-width="1.800"/><path d="M1324 450l9-9" stroke="#b5b9c0" stroke-width="2.500"/>
<path d="M1346 444h9M1347 445v11h7v-11M1349 447v8M1352 447v8" fill="none" stroke="#68778f" stroke-width="1.500"/>
<circle cx="1420" cy="448" r="8" fill="#6a7a94"/><path d="M1420 443v9M1416 449l4 4 4-4" fill="none" stroke="#2f4a88" stroke-width="2"/>
<circle cx="1444" cy="448" r="8" fill="#6a7a94"/><path d="M1444 453v-9M1440 447l4-4 4 4" fill="none" stroke="#2f4a88" stroke-width="2"/>
<rect x="1482" y="439" width="18" height="18" fill="#b5b5b5" stroke="#2a3f78"/>
<rect x="1503" y="438" width="62" height="22" rx="3" fill="none" stroke="#4f6aa4"/>
<text x="1524" y="451" fill="#b9bfca" font-size="10.500" text-anchor="middle">Запуск</text><polygon points="1547,441 1561,448 1547,456" fill="#a8acb4"/>
<polygon points="1304,467 1568,467 1568,491 1293,491 1293,478" fill="url(#bl)"/>
<text x="1431" y="484" fill="#f4f4f8" font-size="16.500" text-anchor="middle">Подробности</text>
<circle cx="1312" cy="479" r="5" fill="none" stroke="#fff" stroke-width="3"/><circle cx="1312" cy="479" r="7.200" fill="none" stroke="#fff" stroke-width="2.200" stroke-dasharray="2.500 3.150"/>
<rect x="1294" y="491" width="274" height="316" fill="#d8dde9"/>
<g fill="#fff" stroke="#b8bcc8" stroke-width="1">
<rect x="1298" y="497.500" width="147" height="17"/><rect x="1447" y="497.500" width="120" height="17"/>
<rect x="1298" y="515" width="147" height="17"/><rect x="1447" y="515" width="120" height="17"/>
<rect x="1298" y="532.500" width="147" height="17"/><rect x="1447" y="532.500" width="120" height="17"/>
<rect x="1298" y="550" width="147" height="17"/><rect x="1447" y="550" width="120" height="17"/>
<rect x="1298" y="567.500" width="147" height="17"/><rect x="1447" y="567.500" width="120" height="17"/>
<rect x="1298" y="585" width="147" height="17"/><rect x="1447" y="585" width="120" height="17"/>
<rect x="1298" y="602.500" width="147" height="17"/><rect x="1447" y="602.500" width="120" height="17"/>
</g>
<text class="t" x="1371" y="510">Объём</text><text class="t" x="1507" y="510">0</text>
<text class="t" x="1371" y="527">Объём след. замеса</text><text class="t" x="1507" y="527">0</text>
<text class="t" x="1371" y="545">Заказчик</text><text class="t" x="1507" y="545">Ручной</text>
<text class="t" x="1371" y="562">Машина</text><text class="t" x="1507" y="562">Ручной</text>
<text class="t" x="1371" y="580">Выполнено</text><text class="t" x="1507" y="580">0,00/0.00 м3</text>
<text class="t" x="1371" y="597">Дата и время создания</text><text class="t" x="1507" y="597">15.07.2022 16:02</text>
<text class="t" x="1371" y="614">Создал</text><text class="t" x="1507" y="614">Service</text>
<rect x="1293" y="807" width="275" height="30" fill="url(#bl)"/>
<path d="M1292.500 855V842.500H1568" fill="none" stroke="#eceadf"/>
<text x="1430" y="856" fill="#f2f2ea" font-size="15" text-anchor="middle" font-family="DejaVu Sans" textLength="188" lengthAdjust="spacing">15:06:51 - 01.08.2022</text>
<g fill="#a9adb4" fill-opacity=".72">
<text x="1238" y="797" font-size="18" textLength="171" lengthAdjust="spacingAndGlyphs">Активация Windows</text>
<text x="1238" y="817" font-size="13.500" textLength="345" lengthAdjust="spacingAndGlyphs">Чтобы активировать Windows, перейдите к параме</text>
<text x="1238" y="835" font-size="13.500">компьютера.</text>
</g>
<!-- Taskbar -->
<rect y="852" width="1568" height="3" fill="#24241a"/><rect x="157" y="852" width="40" height="3" fill="#6e6d5f"/><rect x="197" y="852" width="40" height="3" fill="#d06a1a"/>
</svg>
</body></html>
